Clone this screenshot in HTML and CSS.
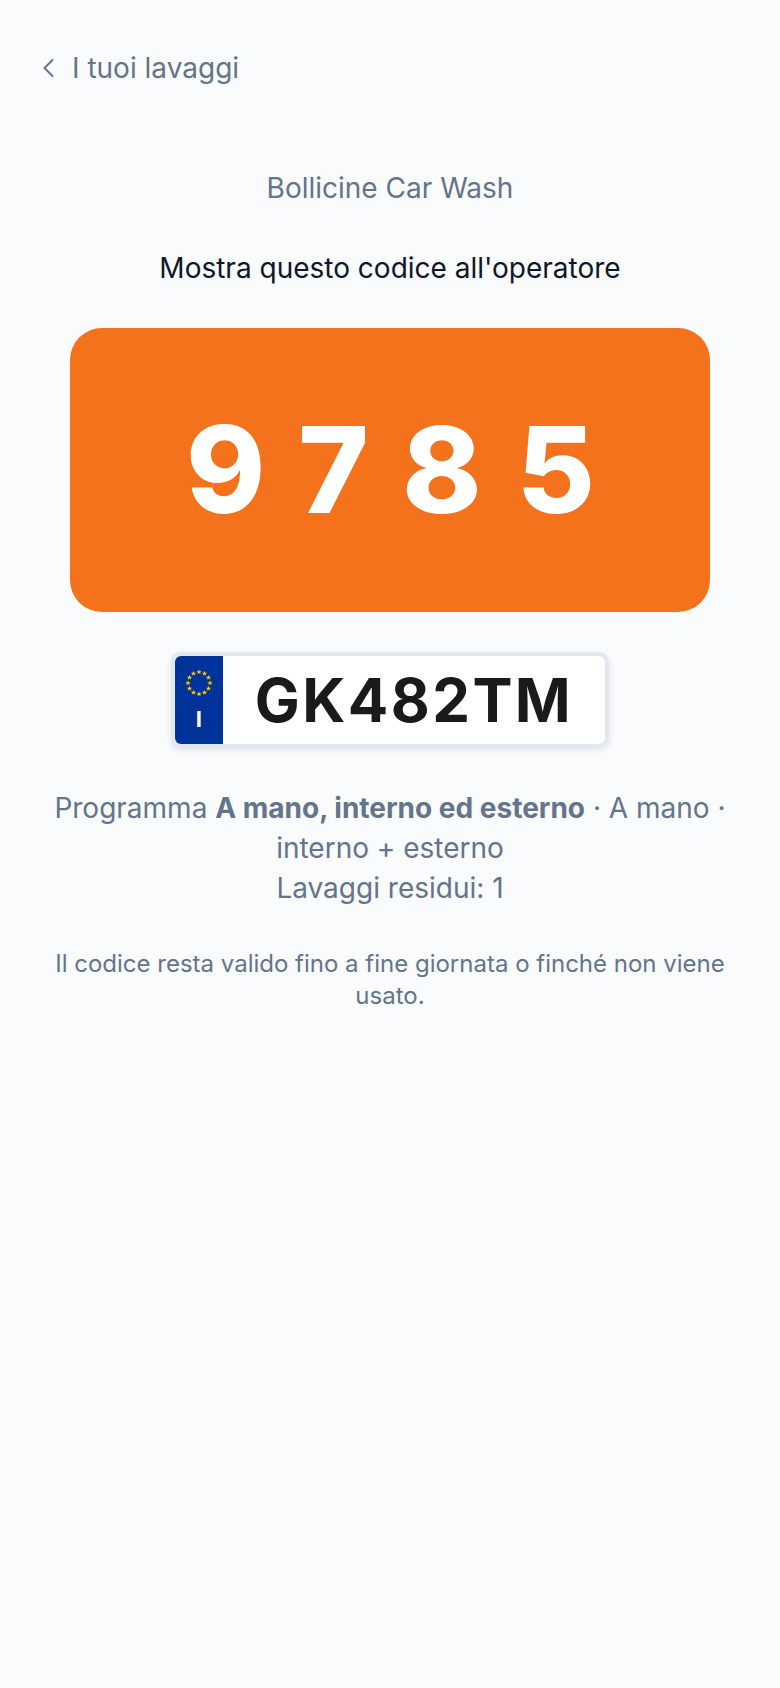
FILE: index.html
```
<!DOCTYPE html>
<html lang="it">
<head>
    <meta charset="UTF-8">
    <meta name="viewport" content="width=device-width, initial-scale=1.0">
    <title>Bollicine Car Wash</title>
    <link rel="stylesheet" href="styles.css">
</head>
<body>
    <header class="topbar">
        <a href="#" class="back">
            <svg class="back-icon" viewBox="0 0 24 24" aria-hidden="true">
                <path d="M12.5 4 4.5 12l8 8"/>
            </svg>
            I tuoi lavaggi
        </a>
    </header>
    <main class="ticket">
        <p class="muted">Bollicine Car Wash</p>
        <p>Mostra questo codice all'operatore</p>
        <div class="code">9785</div>
        <!-- license plate -->
        <div class="plate">
            <div class="plate-country">
                <svg class="stars" viewBox="-14 -14 28 28" aria-hidden="true">
                    <defs>
                        <path id="star" d="M0-2.8.7-.8H2.7L1.1.4 1.7 2.3 0 1.1-1.7 2.3-1.1.4-2.7-.8H-.7Z"/>
                    </defs>
                    <use href="#star" x="0" y="-11"/>
                    <use href="#star" x="5.5" y="-9.5"/>
                    <use href="#star" x="9.5" y="-5.5"/>
                    <use href="#star" x="11" y="0"/>
                    <use href="#star" x="9.5" y="5.5"/>
                    <use href="#star" x="5.5" y="9.5"/>
                    <use href="#star" x="0" y="11"/>
                    <use href="#star" x="-5.5" y="9.5"/>
                    <use href="#star" x="-9.5" y="5.5"/>
                    <use href="#star" x="-11" y="0"/>
                    <use href="#star" x="-9.5" y="-5.5"/>
                    <use href="#star" x="-5.5" y="-9.5"/>
                </svg>
                <span>I</span>
            </div>
            <div class="plate-number">GK482TM</div>
        </div>
        <!-- end license plate -->
        <p class="muted">
            Programma <strong>A mano, interno ed esterno</strong> · A mano · interno + esterno<br>
            Lavaggi residui: 1
        </p>
        <p class="muted note">Il codice resta valido fino a fine giornata o finché non viene usato.</p>
    </main>
</body>
</html>
```
FILE: styles.css
```
*{
    box-sizing: border-box;
}
body{
    margin: 0;
    padding: 48px 40px;
    min-height: 100vh;
    font-family: Inter, sans-serif;
    font-size: 28px;
    line-height: 40px;
    color: #0f172a;
    background-color: #f9fbfd;
}
p{
    margin: 0;
}
.topbar{
    display: flex;
}
.back{
    display: flex;
    align-items: center;
    gap: 8px;
    color: #64748b;
    text-decoration: none;
}
.back-icon{
    width: 24px;
    height: 24px;
    fill: none;
    stroke: currentColor;
    stroke-width: 2;
    stroke-linecap: round;
    stroke-linejoin: round;
}
.ticket{
    display: flex;
    flex-direction: column;
    align-items: center;
    gap: 40px;
    padding-top: 80px;
    text-align: center;
}
.muted{
    color: #64748b;
}
.code{
    width: 100%;
    max-width: 640px;
    padding: 82px 0 82px 36px;
    border-radius: 32px;
    font-size: 120px;
    font-weight: 800;
    line-height: 120px;
    letter-spacing: 35px;
    color: #fff;
    background-color: #f4721b;
}
.plate{
    display: flex;
    overflow: hidden;
    border: 4px solid #e2e8f0;
    border-radius: 10px;
    background-color: #fff;
    box-shadow: 0 2px 6px rgba(0, 0, 0, 0.1);
}
.plate-country{
    display: flex;
    flex-direction: column;
    align-items: center;
    justify-content: center;
    gap: 8px;
    width: 48px;
    padding-top: 2px;
    font-size: 22px;
    font-weight: 700;
    line-height: 28px;
    color: #fff;
    background-color: #003399;
}
.stars{
    width: 28px;
    height: 28px;
    fill: #ffcc00;
}
.plate-number{
    padding: 0 32px;
    font-size: 60px;
    font-weight: 700;
    line-height: 88px;
    letter-spacing: 0.04em;
    color: #1a1a1a;
}
.note{
    font-size: 24px;
    line-height: 32px;
}
```
